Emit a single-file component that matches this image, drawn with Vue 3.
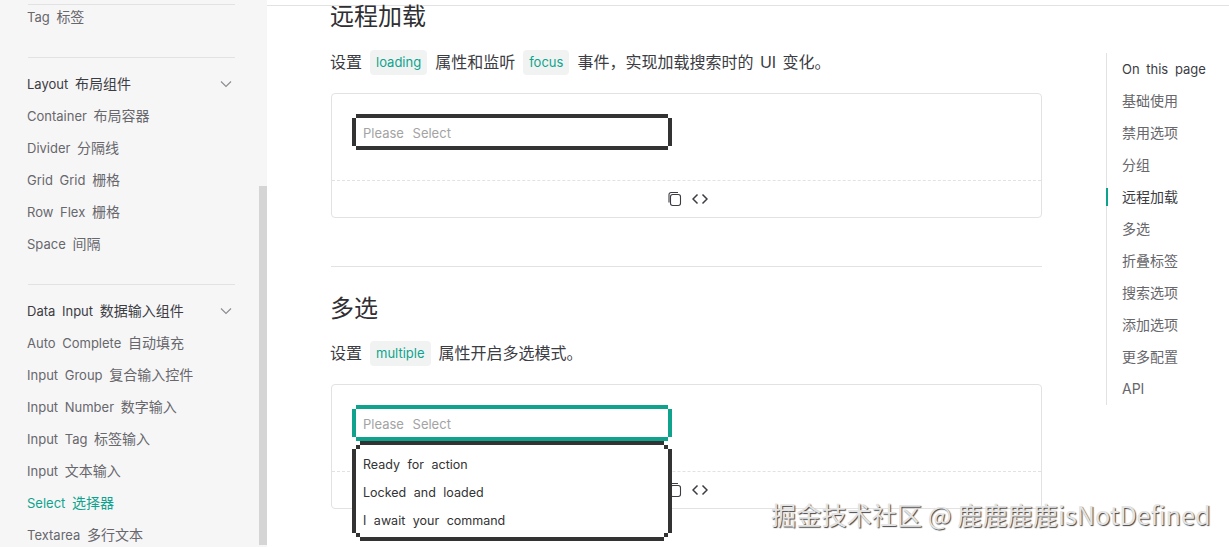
<script setup>
const groups = [
  { title: 'Layout 布局组件', items: ['Container 布局容器', 'Divider 分隔线', 'Grid Grid 栅格', 'Row Flex 栅格', 'Space 间隔'] },
  { title: 'Data Input 数据输入组件', items: ['Auto Complete 自动填充', 'Input Group 复合输入控件', 'Input Number 数字输入', 'Input Tag 标签输入', 'Input 文本输入', 'Select 选择器', 'Textarea 多行文本'] }
]
const toc = ['基础使用', '禁用选项', '分组', '远程加载', '多选', '折叠标签', '搜索选项', '添加选项', '更多配置', 'API']
const options = ['Ready for action', 'Locked and loaded', 'I await your command']
const latin = (s) => s.replace(/[\u4e00-\u9fff].*$/, '')
const cjk = (s) => s.slice(latin(s).length)
</script>

<template>
  <div class="page">
    <aside class="sidebar">
      <div class="group first"><div class="item"><span class="la">Tag </span>标签</div></div>
      <div v-for="g in groups" :key="g.title" class="group">
        <div class="item head">
          <span><span class="la">{{ latin(g.title) }}</span>{{ cjk(g.title) }}</span>
          <svg class="chev" width="14" height="14" viewBox="0 0 14 14" fill="none" stroke="#8b8b90" stroke-width="1.1"><path d="M2 4.5 7 9.5 12 4.5" /></svg>
        </div>
        <div v-for="i in g.items" :key="i" class="item" :class="{ active: i.startsWith('Select') }"><span class="la">{{ latin(i) }}</span>{{ cjk(i) }}</div>
      </div>
      <div class="scrollbar"></div>
    </aside>
    <main class="main">
      <div class="topline"></div>
      <div class="columns">
        <article class="content">
          <h2 class="h first-h">远程加载</h2>
          <p class="desc">设置<code>loading</code>属性和监听<code>focus</code>事件，实现加载搜索时的 UI 变化。</p>
          <section class="demo">
            <div class="demo-body">
              <div class="select"><div class="field">Please Select</div></div>
            </div>
            <div class="demo-foot">
              <svg width="16" height="16" viewBox="0 0 16 16" fill="none" stroke="#3c3c43" stroke-width="1.1"><path d="M3 11.5V3.5a2 2 0 0 1 2-2h7" /><rect x="4.5" y="3.5" width="10" height="11" rx="2.2" /></svg>
              <svg width="16" height="16" viewBox="0 0 16 16" fill="none" stroke="#3c3c43" stroke-width="1.5"><path d="M5.5 3.5 1 8l4.5 4.5M10.5 3.5 15 8l-4.5 4.5" /></svg>
            </div>
          </section>
          <hr class="rule" />
          <h2 class="h">多选</h2>
          <p class="desc second">设置<code>multiple</code>属性开启多选模式。</p>
          <section class="demo">
            <div class="demo-body">
              <div class="select focus">
                <div class="field">Please Select</div>
                <div class="drop">
                  <div class="drop-in">
                    <div v-for="o in options" :key="o" class="opt">{{ o }}</div>
                  </div>
                </div>
              </div>
            </div>
            <div class="demo-foot">
              <svg width="16" height="16" viewBox="0 0 16 16" fill="none" stroke="#3c3c43" stroke-width="1.1"><path d="M3 11.5V3.5a2 2 0 0 1 2-2h7" /><rect x="4.5" y="3.5" width="10" height="11" rx="2.2" /></svg>
              <svg width="16" height="16" viewBox="0 0 16 16" fill="none" stroke="#3c3c43" stroke-width="1.5"><path d="M5.5 3.5 1 8l4.5 4.5M10.5 3.5 15 8l-4.5 4.5" /></svg>
            </div>
          </section>
        </article>
        <nav class="toc">
          <div class="toc-item title la">On this page</div>
          <div v-for="t in toc" :key="t" class="toc-item" :class="{ cur: t === '远程加载' }">{{ t }}</div>
        </nav>
      </div>
    </main>
    <div class="watermark">掘金技术社区 @ 鹿鹿鹿鹿isNotDefined</div>
  </div>
</template>

<style>
html, body { margin: 0; background: #fff; overflow: hidden; }
</style>

<style scoped>
.page {
  position: relative; display: flex; width: 1229px; height: 547px; overflow: hidden; background: #fff;
  font-family: "Inter", "Noto Sans CJK SC", sans-serif; font-size: 14px; color: #3c3c43;
}
.la { font-size: 13px; word-spacing: 3px; }
.sidebar { position: relative; flex: none; width: 267px; box-sizing: border-box; background: #f6f6f7; padding: 4px 32px 0 27px; }
.group { border-top: 1px solid #e2e2e3; margin-left: 1px; padding: 10px 0 24px; }
.group.first { padding: 0 0 28px; }
.group.first .item { height: 24px; line-height: 24px; }
.item { height: 32px; line-height: 32px; margin-left: -1px; color: #67676c; white-space: nowrap; }
.item.head { display: flex; align-items: center; justify-content: space-between; color: #3c3c43; }
.item.active { color: #0fa38d; }
.chev { margin-right: 2px; }
.scrollbar { position: absolute; right: 0; top: 186px; width: 8px; height: 359px; background: #d5d5d5; }
.main { flex: 1; min-width: 0; }
.topline { height: 5px; border-bottom: 1px solid #e2e2e3; }
.columns { display: flex; padding-left: 64px; }
.content { flex: none; width: 711px; }
.h { margin: 26px 0 0 -1px; font-size: 24px; font-weight: 400; line-height: 32px; color: #2f2f33; }
.h.first-h { margin: 0 0 0 -1px; line-height: 22px; }
.desc { height: 28px; margin: 20px 0 17px -1px; line-height: 28px; font-size: 16px; word-spacing: 2px; }
.desc.second { margin-top: 14px; }
code {
  display: inline-block; margin: 0 8px; padding: 0 6px; height: 25px; line-height: 25px; border-radius: 4px;
  background: #f1f3f3; color: #0fa38d; font-family: inherit; font-size: 13px; vertical-align: 1px;
}
.demo { border: 1px solid #e2e2e3; border-radius: 4px; }
.demo-body { padding: 24px 24px 34px; border-bottom: 1px dashed #e2e2e3; height: 28px; }
.demo-foot { height: 36px; display: flex; align-items: center; justify-content: center; gap: 10px; }
.select { position: relative; width: 312px; height: 28px; }
.field {
  height: 28px; line-height: 30px; padding-left: 7px; background: #fff; color: #a3a3a3;
  font-size: 13px; word-spacing: 5px;
  box-shadow: 0 -4px 0 #333, 0 4px 0 #333, -4px 0 0 #333, 4px 0 0 #333;
}
.select.focus .field { box-shadow: 0 -4px 0 #0fa38d, 0 4px 0 #0fa38d, -4px 0 0 #0fa38d, 4px 0 0 #0fa38d; }
.drop {
  position: absolute; z-index: 2; left: -4px; top: 32px; width: 320px; height: 100px; background: #333;
  clip-path: polygon(8px 0, 312px 0, 312px 4px, 316px 4px, 316px 8px, 320px 8px, 320px 92px, 316px 92px, 316px 96px, 312px 96px, 312px 100px, 8px 100px, 8px 96px, 4px 96px, 4px 92px, 0 92px, 0 8px, 4px 8px, 4px 4px, 8px 4px);
}
.drop-in {
  position: absolute; left: 4px; top: 4px; width: 312px; height: 92px; box-sizing: border-box; padding: 6px 0 2px; background: #fff;
  clip-path: polygon(4px 0, 308px 0, 308px 4px, 312px 4px, 312px 88px, 308px 88px, 308px 92px, 4px 92px, 4px 88px, 0 88px, 0 4px, 4px 4px);
}
.opt { height: 28px; line-height: 28px; padding-left: 7px; color: #333; white-space: nowrap; font-size: 12.5px; word-spacing: 4px; }
.rule { border: 0; border-top: 1px solid #e2e2e3; margin: 48px 0 0; }
.toc { flex: none; margin: 47px 0 0 64px; height: 352px; border-left: 1px solid #e2e2e3; padding-left: 15px; }
.toc-item { position: relative; height: 32px; line-height: 32px; color: #67676c; white-space: nowrap; }
.toc-item.title, .toc-item.cur { color: #3c3c43; }
.toc-item.cur::before { content: ""; position: absolute; left: -16px; top: 7px; width: 2px; height: 18px; background: #0fa38d; }
.watermark {
  position: absolute; z-index: 3; left: 771px; top: 497px; font-family: "Noto Sans CJK SC", sans-serif; font-size: 25.2px; line-height: 34px;
  color: #e4e4e4; text-shadow: 1px 1px 1px #444; white-space: nowrap;
}
</style>
